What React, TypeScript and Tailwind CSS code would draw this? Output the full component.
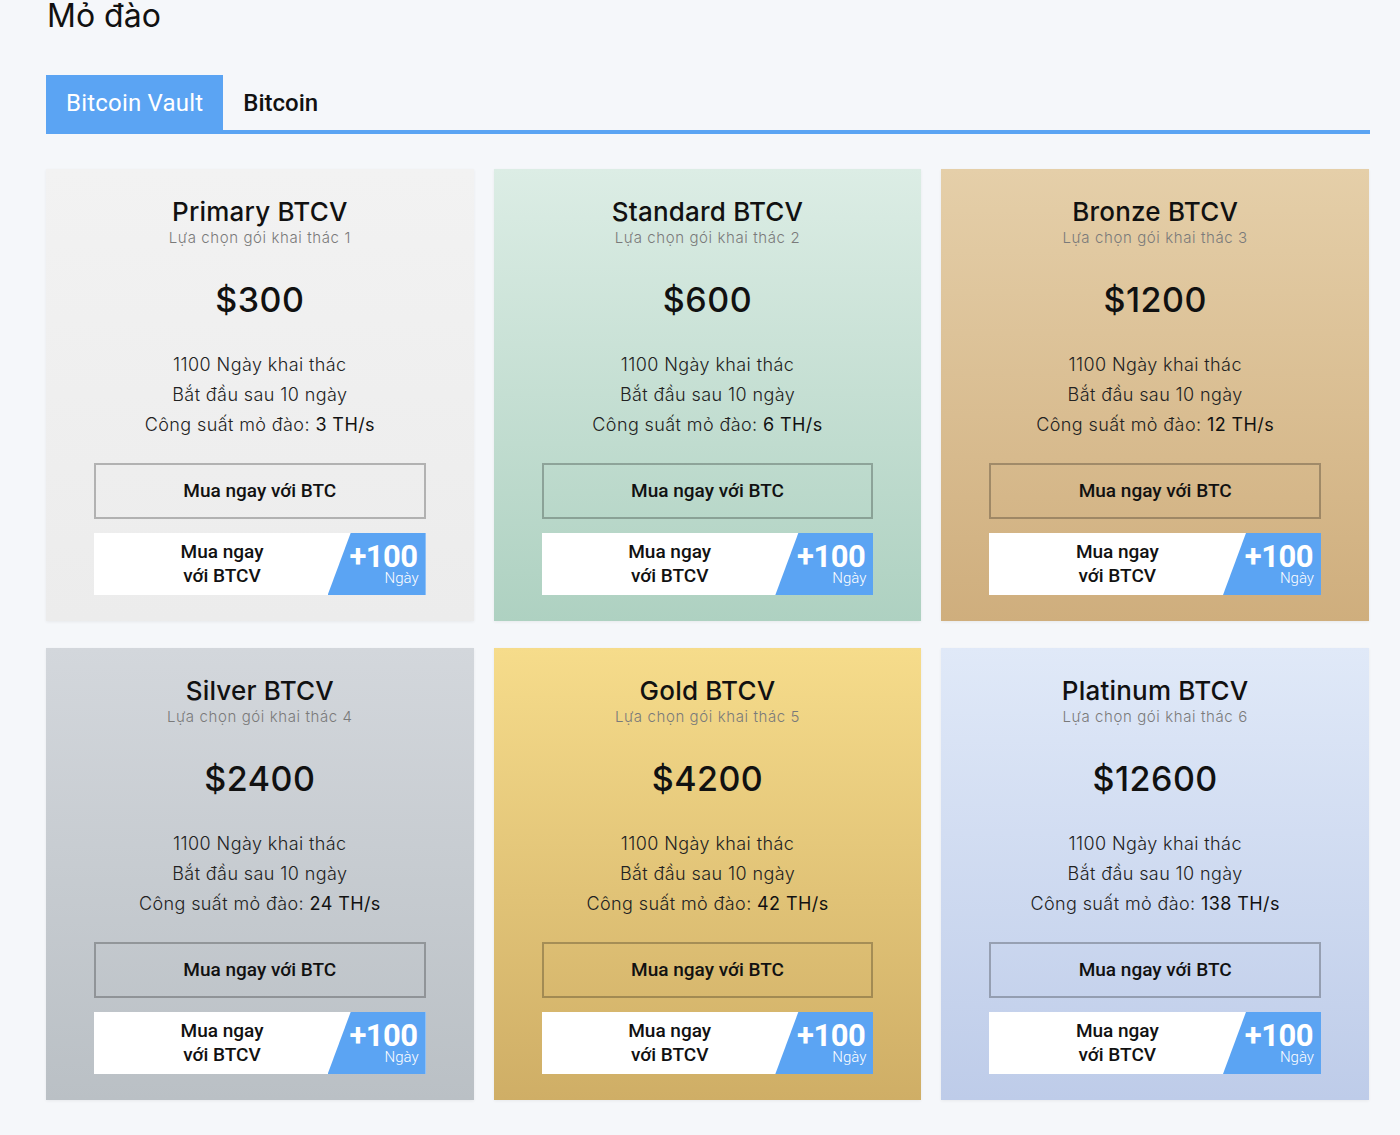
const plans = [
  { name: "Primary BTCV", idx: 1, price: "$300", power: 3, bg: "bg-gradient-to-b from-[#f2f2f2] to-[#ececec]" },
  { name: "Standard BTCV", idx: 2, price: "$600", power: 6, bg: "bg-gradient-to-b from-[#dcede5] to-[#aed1c1]" },
  { name: "Bronze BTCV", idx: 3, price: "$1200", power: 12, bg: "bg-gradient-to-b from-[#e5cfa9] to-[#cfae7d]" },
  { name: "Silver BTCV", idx: 4, price: "$2400", power: 24, bg: "bg-gradient-to-b from-[#d3d7dc] to-[#bac0c5]" },
  { name: "Gold BTCV", idx: 5, price: "$4200", power: 42, bg: "bg-gradient-to-b from-[#f6dc8b] to-[#cfae66]" },
  { name: "Platinum BTCV", idx: 6, price: "$12600", power: 138, bg: "bg-gradient-to-b from-[#e0e9f8] to-[#becce9]" },
];

const PlanCard = ({ plan }: { plan: (typeof plans)[number] }) => (
  <div className={`${plan.bg} flex flex-col items-center pt-[27px] pb-[26px] px-12 shadow-[0_1px_3px_rgba(0,0,0,0.06)] font-['Inter',sans-serif] text-[#111]`}>
    <h3 className="text-[26px] leading-[32px] font-medium tracking-[0.2px]">{plan.name}</h3>
    <p className="text-[15px] leading-[20px] text-[#7a7a7a] font-light tracking-[0.6px]">
      Lựa chọn gói khai thác {plan.idx}
    </p>
    <div className="mt-[32px] text-[34px] leading-[40px] font-medium tracking-[0.5px]">{plan.price}</div>
    <div className="mt-[30px] flex flex-col items-center text-[18px] leading-[30px] text-[#222] tracking-[0.4px] font-light">
      <span>1100 Ngày khai thác</span>
      <span>Bắt đầu sau 10 ngày</span>
      <span>
        Công suất mỏ đào: <span className="font-normal text-[#111]">{plan.power} TH/s</span>
      </span>
    </div>
    <button className="mt-[23px] w-full h-[56px] border-2 border-black/25 text-[19px] font-medium font-['Roboto',sans-serif] text-[#111]">
      Mua ngay với BTC
    </button>
    <div className="relative mt-[14px] w-full h-[62px] bg-white font-['Roboto',sans-serif]">
      <div className="w-[256px] h-full flex flex-col items-center justify-center text-[19px] leading-[24px] font-medium text-[#111]">
        <span>Mua ngay</span>
        <span>với BTCV</span>
      </div>
      <div className="absolute right-0 top-0 h-full w-[98px] bg-[#5ba4f3] [clip-path:polygon(23px_0,100%_0,100%_100%,0_100%)] flex flex-col items-end justify-center pr-[8px] text-white">
        <span className="text-[31px] leading-[27px] font-bold tracking-[-0.5px]">+100</span>
        <span className="text-[15px] leading-[16px] font-light -mr-[1px]">Ngày</span>
      </div>
    </div>
  </div>
);

export default function App() {
  return (
    <div className="min-h-[1135px] bg-[#f5f7fa] px-[46px] pb-10">
      <h1 className="pl-[1px] text-[32px] leading-[32px] font-['Inter',sans-serif] text-[#111]">Mỏ đào</h1>
      <div className="mt-[43px] w-[1324px] flex border-b-4 border-[#5ba4f3] font-['Roboto',sans-serif] text-[24px]">
        <button className="h-[55px] px-5 bg-[#5ba4f3] text-white tracking-[0.2px]">Bitcoin Vault</button>
        <button className="h-[55px] px-5 font-medium text-[#111]">Bitcoin</button>
      </div>
      <div className="mt-[35px] w-[1323px] grid grid-cols-3 gap-x-[20px] gap-y-[27px]">
        {plans.map((p) => (
          <PlanCard key={p.idx} plan={p} />
        ))}
      </div>
    </div>
  );
}
